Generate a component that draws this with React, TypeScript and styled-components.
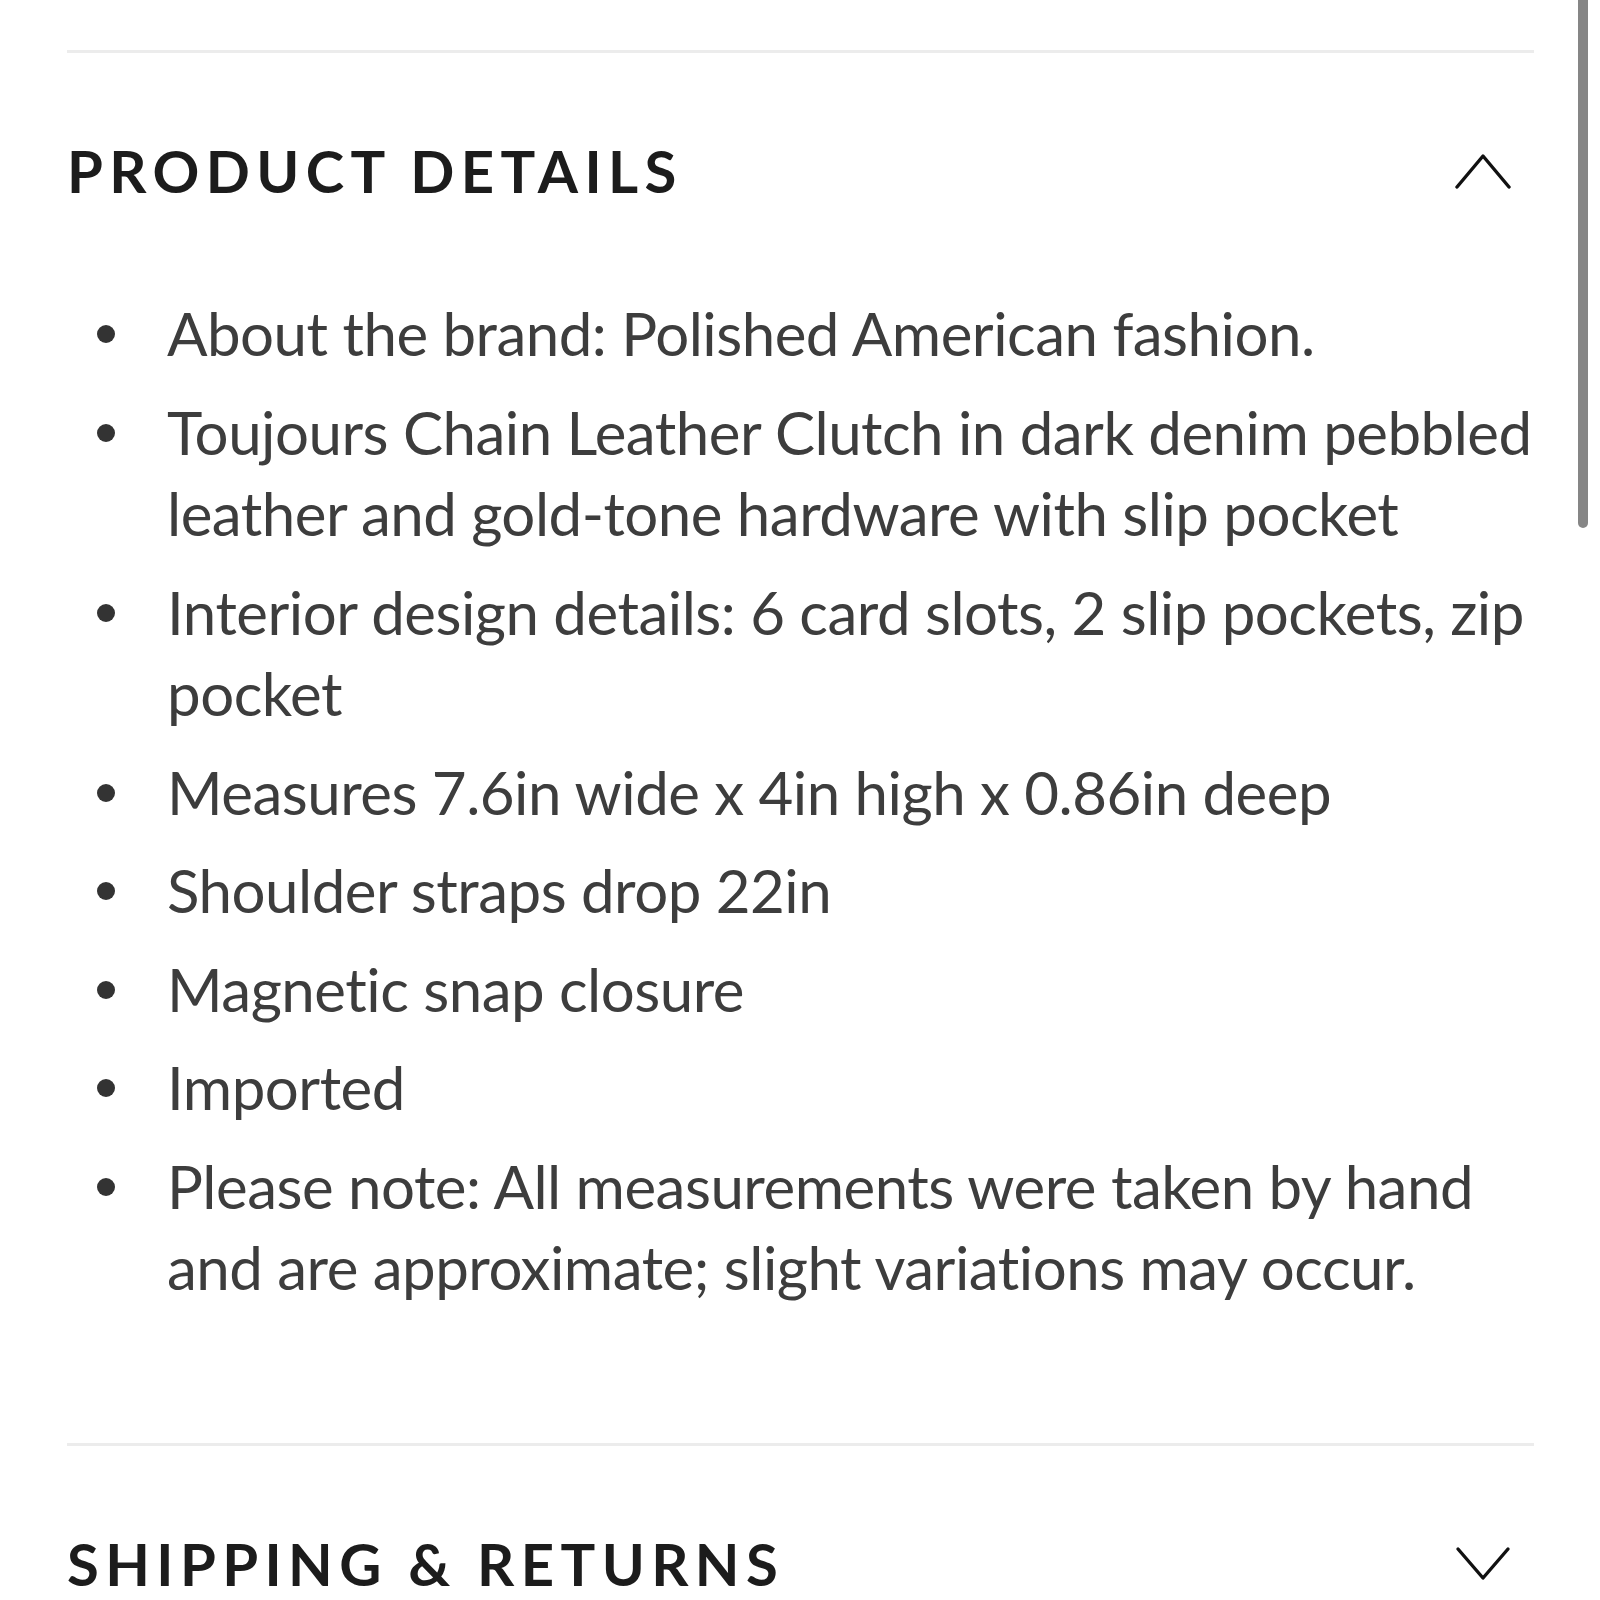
import React from "react";
import styled, { createGlobalStyle } from "styled-components";

const Global = createGlobalStyle`
  html, body { margin: 0; padding: 0; background: #ffffff; }
  body { font-family: Lato, "Liberation Sans", sans-serif; }
`;

const Page = styled.div`
  position: relative;
  width: 1600px;
  height: 1600px;
  overflow: hidden;
  box-sizing: border-box;
  padding: 50px 66px 0 67px;
  background: #ffffff;
`;

const Scrollbar = styled.div`
  position: absolute;
  left: 1578px;
  top: 0;
  width: 10px;
  height: 528px;
  border-radius: 0 0 5px 5px;
  background: #868686;
`;

const Section = styled.section`
  border-top: 3px solid #ececec;
`;

const Header = styled.div`
  display: flex;
  align-items: center;
  justify-content: space-between;
  padding-top: 88px;
  padding-right: 22px;
`;

const Title = styled.h2`
  margin: 0;
  font-family: Lato, "Liberation Sans", sans-serif;
  font-weight: 700;
  font-size: 58px;
  line-height: 60px;
  letter-spacing: 6.4px;
  color: #1c1c1c;
`;

const Chevron = styled.svg`
  width: 58px;
  height: 36px;
  flex: none;
`;

const List = styled.ul`
  list-style: none;
  margin: 92px 0 134px 0;
  padding: 0;
  display: flex;
  flex-direction: column;
  gap: 17px;
`;

const Item = styled.li`
  display: grid;
  grid-template-columns: 100px 1fr;
  font-family: Lato, "Liberation Sans", sans-serif;
  font-size: 60px;
  letter-spacing: -0.5px;
  line-height: 81.5px;
  color: #3d3d3d;
`;

const Dot = styled.span`
  width: 18px;
  height: 18px;
  border-radius: 50%;
  background: #333333;
  margin: 32px 0 0 30px;
`;

const ChevronIcon = ({ up }: { up?: boolean }) => (
  <Chevron viewBox="0 0 58 36">
    <polyline
      points={up ? "3,34 29,3 55,34" : "4,3 29,32 54,3"}
      fill="none"
      stroke="#111"
      strokeWidth="3.4"
      strokeLinecap="round"
      strokeLinejoin="round"
    />
  </Chevron>
);

const items = [
  "About the brand: Polished American fashion.",
  "Toujours Chain Leather Clutch in dark denim pebbled leather and gold-tone hardware with slip pocket",
  "Interior design details: 6 card slots, 2 slip pockets, zip pocket",
  "Measures 7.6in wide x 4in high x 0.86in deep",
  "Shoulder straps drop 22in",
  "Magnetic snap closure",
  "Imported",
  "Please note: All measurements were taken by hand and are approximate; slight variations may occur.",
];

export default function App() {
  return (
    <>
      <Global />
      <Page>
        <Section>
          <Header>
            <Title>PRODUCT DETAILS</Title>
            <ChevronIcon up />
          </Header>
          <List>
            {items.map((t) => (
              <Item key={t}>
                <Dot />
                <span>{t}</span>
              </Item>
            ))}
          </List>
        </Section>
        <Section>
          <Header>
            <Title>SHIPPING &amp; RETURNS</Title>
            <ChevronIcon />
          </Header>
        </Section>
        <Scrollbar />
      </Page>
    </>
  );
}
